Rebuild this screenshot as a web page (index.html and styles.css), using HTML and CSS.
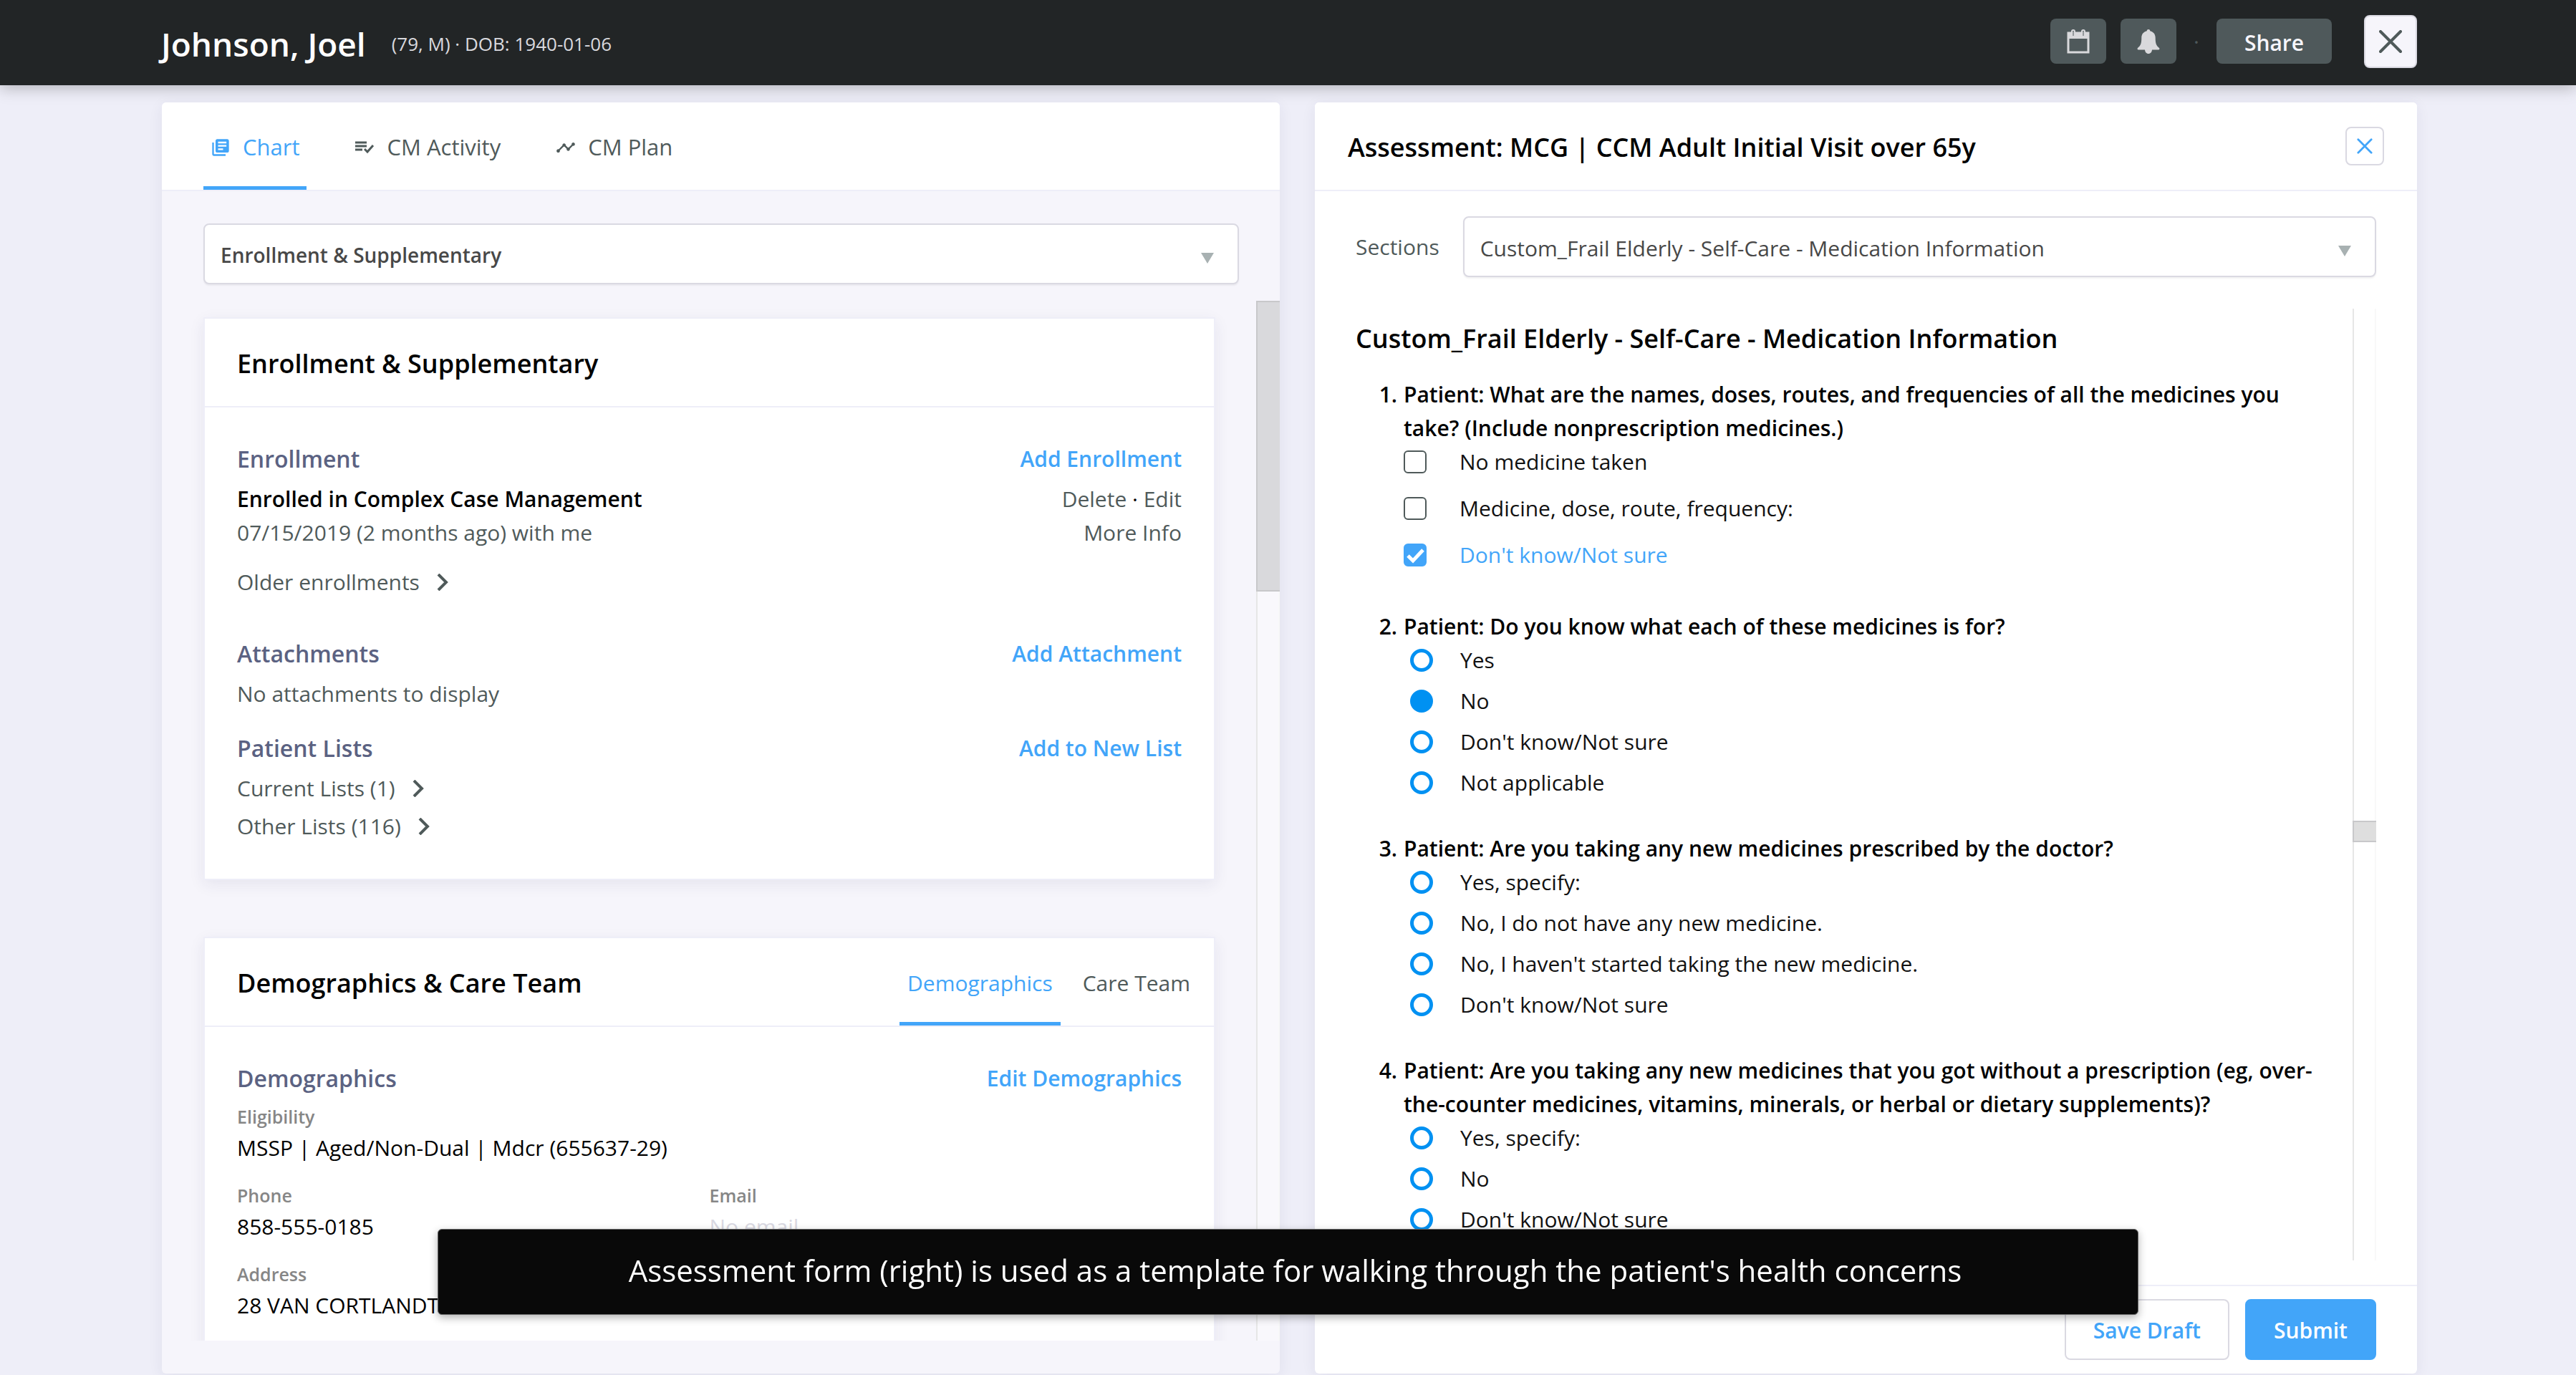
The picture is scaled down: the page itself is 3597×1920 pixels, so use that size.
FILE: index.html
```html
<!DOCTYPE html>
<html lang="en">
<head>
<meta charset="utf-8">
<title>Johnson, Joel</title>
<link rel="stylesheet" href="styles.css">
</head>
<body>
<header class="topbar">
  <div class="patient">
    <h1 class="patient-name">Johnson, Joel</h1>
    <span class="patient-meta">(79, M) · DOB: 1940-01-06</span>
  </div>
  <div class="topbar-actions">
    <button class="icon-button" aria-label="Calendar">
      <svg class="icon-action" viewBox="0 0 32 34" fill="none" stroke="currentColor"><path d="M2 5h28v27H2z" stroke-width="3"/><path d="M1 5h30v8H1z" fill="currentColor" stroke="none"/><rect x="7" y="1" width="4" height="9" rx="2" stroke-width="2"/><rect x="21" y="1" width="4" height="9" rx="2" stroke-width="2"/><path d="M9 4v5M23 4v5" stroke="#4f595b" stroke-width="1"/></svg>
    </button>
    <button class="icon-button" aria-label="Notifications">
      <svg class="icon-action" viewBox="0 0 32 34" fill="currentColor"><path d="M16 0c1.400 0 2.200.9 2.200 2.300 4.600 1 7.500 4.500 7.500 9.700 0 8 1.500 11 5.300 14 .9 1 .4 2.500-1 2.500h-9c-.2 3-2.100 5.500-5 5.500s-4.800-2.500-5-5.500H2c-1.400 0-1.900-1.500-1-2.500 3.800-3 5.300-6 5.300-14 0-5.200 2.900-8.700 7.500-9.700C13.800.9 14.600 0 16 0z"/></svg>
    </button>
    <span class="dot">·</span>
    <button class="share-button">Share</button>
    <button class="close-button" aria-label="Close patient"><svg class="icon-close" viewBox="0 0 32 32" fill="none" stroke="currentColor" stroke-width="4" stroke-linecap="round"><path d="M2 2l28 28M30 2L2 30"/></svg></button>
  </div>
</header>

<main class="workspace">
  <section class="panel chart-panel">
    <nav class="panel-head tabs">
      <a class="tab tab-active" href="#chart"><svg class="icon-tab" viewBox="0 0 24 24" fill="currentColor"><path d="M4 6H2v14c0 1.100.9 2 2 2h14v-2H4V6zm16-4H8c-1.100 0-2 .9-2 2v12c0 1.100.9 2 2 2h12c1.100 0 2-.9 2-2V4c0-1.100-.9-2-2-2zm-1 9H9V9h10v2zm-4 4H9v-2h6v2zm4-8H9V5h10v2z"/></svg>Chart</a>
      <a class="tab" href="#activity"><svg class="icon-tab" viewBox="0 0 28 28" fill="none" stroke="currentColor" stroke-width="3"><path d="M1 7h16M1 12h16M1 17h10M14 16l4 4 8-9"/></svg>CM Activity</a>
      <a class="tab" href="#plan"><svg class="icon-tab" viewBox="0 0 24 24" fill="currentColor"><path d="M23 8c0 1.100-.9 2-2 2-.18 0-.35-.02-.51-.07l-3.560 3.550c.05.16.07.34.07.52 0 1.100-.9 2-2 2s-2-.9-2-2c0-.18.02-.36.07-.52l-2.550-2.550c-.16.05-.34.07-.52.07s-.36-.02-.52-.07l-4.550 4.560c.05.16.07.33.07.51 0 1.100-.9 2-2 2s-2-.9-2-2 .9-2 2-2c.18 0 .35.02.51.07l4.560-4.550C8.020 9.360 8 9.180 8 9c0-1.100.9-2 2-2s2 .9 2 2c0 .18-.02.36-.07.52l2.550 2.550c.16-.05.34-.07.52-.07s.36.02.52.07l3.550-3.560C19.020 8.350 19 8.180 19 8c0-1.100.9-2 2-2s2 .9 2 2z"/></svg>CM Plan</a>
    </nav>
    <div class="select-wrap chart-select">
      <select class="select select-strong" aria-label="Chart section"><option>Enrollment &amp; Supplementary</option></select>
      <svg class="select-arrow" viewBox="0 0 18 15"><path d="M0 0h18L9 15z"/></svg>
    </div>
    <div class="scroll">
      <div class="cards">
        <article class="card">
          <div class="card-head"><h2 class="title">Enrollment &amp; Supplementary</h2></div>
          <div class="card-body">
            <section class="block">
              <div class="row head-row"><h3 class="subtitle">Enrollment</h3><a class="action" href="#add-enrollment">Add Enrollment</a></div>
              <div class="row"><strong class="strong">Enrolled in Complex Case Management</strong><span><a class="link" href="#delete">Delete</a> · <a class="link" href="#edit">Edit</a></span></div>
              <div class="row muted"><span>07/15/2019 (2 months ago) with me</span><a class="link" href="#more">More Info</a></div>
              <button class="expander expander-spaced">Older enrollments<svg class="icon-chevron" viewBox="0 0 16 24" fill="none" stroke="currentColor" stroke-width="4"><path d="M2 1l11 11L2 23"/></svg></button>
            </section>
            <section class="block attachments">
              <div class="row head-row"><h3 class="subtitle">Attachments</h3><a class="action" href="#add-attachment">Add Attachment</a></div>
              <p class="muted">No attachments to display</p>
            </section>
            <section class="block lists">
              <div class="row head-row"><h3 class="subtitle">Patient Lists</h3><a class="action" href="#add-list">Add to New List</a></div>
              <button class="expander">Current Lists (1)<svg class="icon-chevron" viewBox="0 0 16 24" fill="none" stroke="currentColor" stroke-width="4"><path d="M2 1l11 11L2 23"/></svg></button>
              <button class="expander expander-next">Other Lists (116)<svg class="icon-chevron" viewBox="0 0 16 24" fill="none" stroke="currentColor" stroke-width="4"><path d="M2 1l11 11L2 23"/></svg></button>
            </section>
          </div>
        </article>

        <article class="card">
          <div class="card-head">
            <h2 class="title">Demographics &amp; Care Team</h2>
            <nav class="card-tabs"><a class="tab tab-active" href="#demographics">Demographics</a><a class="tab" href="#care-team">Care Team</a></nav>
          </div>
          <div class="card-body">
            <div class="row head-row"><h3 class="subtitle">Demographics</h3><a class="action" href="#edit-demographics">Edit Demographics</a></div>
            <dl class="facts">
              <div class="fact fact-wide"><dt>Eligibility</dt><dd>MSSP | Aged/Non-Dual | Mdcr (655637-29)</dd></div>
              <div class="fact"><dt>Phone</dt><dd>858-555-0185</dd></div>
              <div class="fact"><dt>Email</dt><dd class="empty">No email</dd></div>
              <div class="fact fact-wide"><dt>Address</dt><dd>28 VAN CORTLANDT</dd></div>
            </dl>
          </div>
        </article>
      </div>
      <div class="scrollbar"><div class="thumb thumb-chart"></div></div>
    </div>
  </section>

  <section class="panel form-panel">
    <div class="panel-head form-head">
      <h2 class="title">Assessment: MCG | CCM Adult Initial Visit over 65y</h2>
      <button class="dismiss" aria-label="Close assessment"><svg class="icon-dismiss" viewBox="0 0 24 24" fill="none" stroke="currentColor" stroke-width="3" stroke-linecap="round"><path d="M2 2l20 20M22 2L2 22"/></svg></button>
    </div>
    <div class="sections">
      <label class="muted" for="section">Sections</label>
      <div class="select-wrap">
        <select class="select" id="section"><option>Custom_Frail Elderly - Self-Care - Medication Information</option></select>
        <svg class="select-arrow" viewBox="0 0 18 15"><path d="M0 0h18L9 15z"/></svg>
      </div>
    </div>
    <div class="scroll form-scroll">
      <form class="questions" id="assessment">
        <h3 class="title">Custom_Frail Elderly - Self-Care - Medication Information</h3>
        <div class="question" role="group" aria-labelledby="q1">
          <span class="number">1.</span>
          <p class="prompt" id="q1">Patient: What are the names, doses, routes, and frequencies of all the medicines you take? (Include nonprescription medicines.)</p>
          <div class="options options-check">
            <label class="option"><input class="check" type="checkbox"><span>No medicine taken</span></label>
            <label class="option"><input class="check" type="checkbox"><span>Medicine, dose, route, frequency:</span></label>
            <label class="option option-on"><span class="check-wrap"><input class="check" type="checkbox" checked><svg class="tick" viewBox="0 0 32 32" fill="none" stroke="#fff" stroke-width="5"><path d="M6 17l7 7L27 9"/></svg></span><span>Don't know/Not sure</span></label>
          </div>
        </div>
        <div class="question" role="group" aria-labelledby="q2">
          <span class="number">2.</span>
          <p class="prompt" id="q2">Patient: Do you know what each of these medicines is for?</p>
          <div class="options">
            <label class="option"><input class="radio" type="radio" name="q2"><span>Yes</span></label>
            <label class="option"><input class="radio" type="radio" name="q2" checked><span>No</span></label>
            <label class="option"><input class="radio" type="radio" name="q2"><span>Don't know/Not sure</span></label>
            <label class="option"><input class="radio" type="radio" name="q2"><span>Not applicable</span></label>
          </div>
        </div>
        <div class="question" role="group" aria-labelledby="q3">
          <span class="number">3.</span>
          <p class="prompt" id="q3">Patient: Are you taking any new medicines prescribed by the doctor?</p>
          <div class="options">
            <label class="option"><input class="radio" type="radio" name="q3"><span>Yes, specify:</span></label>
            <label class="option"><input class="radio" type="radio" name="q3"><span>No, I do not have any new medicine.</span></label>
            <label class="option"><input class="radio" type="radio" name="q3"><span>No, I haven't started taking the new medicine.</span></label>
            <label class="option"><input class="radio" type="radio" name="q3"><span>Don't know/Not sure</span></label>
          </div>
        </div>
        <div class="question" role="group" aria-labelledby="q4">
          <span class="number">4.</span>
          <p class="prompt" id="q4">Patient: Are you taking any new medicines that you got without a prescription (eg, over-the-counter medicines, vitamins, minerals, or herbal or dietary supplements)?</p>
          <div class="options">
            <label class="option"><input class="radio" type="radio" name="q4"><span>Yes, specify:</span></label>
            <label class="option"><input class="radio" type="radio" name="q4"><span>No</span></label>
            <label class="option"><input class="radio" type="radio" name="q4"><span>Don't know/Not sure</span></label>
          </div>
        </div>
      </form>
      <div class="scrollbar"><div class="thumb thumb-form"></div></div>
    </div>
    <footer class="form-foot">
      <button class="button" form="assessment" type="button">Save Draft</button>
      <button class="button button-primary" form="assessment">Submit</button>
    </footer>
  </section>
</main>

<div class="caption" role="status">Assessment form (right) is used as a template for walking through the patient's health concerns</div>
</body>
</html>
```

FILE: styles.css
```css
:root {
  --blue: #42a5f9;
  --radio: #0091f2;
  --ink: #4f5a5a;
  --line: #eeeef8;
  --edge: #dad9e2;
}

* {
  box-sizing: border-box;
}

body {
  margin: 0;
  height: 100vh;
  display: flex;
  flex-direction: column;
  overflow: hidden;
  background: #eeeef8;
  color: #000;
  font-family: "Open Sans", "Noto Sans", sans-serif;
  font-size: 30px;
  line-height: 47px;
}

h1, h2, h3, p, dl, dd {
  margin: 0;
}

a {
  text-decoration: none;
}

button, select {
  font: inherit;
  margin: 0;
}

svg {
  display: block;
  flex: none;
}

/* Top bar */
.topbar {
  flex: none;
  height: 119px;
  padding: 0 222px 4px 225px;
  display: flex;
  align-items: center;
  justify-content: space-between;
  background: #222526;
  box-shadow: 0 4px 20px rgba(0, 0, 0, .25);
}

.patient {
  display: flex;
  align-items: center;
  gap: 36px;
  padding-top: 8px;
}

.patient-name {
  color: #fff;
  font-size: 46px;
  font-weight: 600;
}

.patient-meta {
  color: #d9d9de;
  font-size: 26px;
}

.topbar-actions {
  display: flex;
  align-items: center;
  gap: 20px;
}

.icon-button,
.share-button {
  height: 63px;
  border: 0;
  border-radius: 8px;
  background: #4f595b;
  color: #d9d9dc;
}

.icon-button {
  width: 78px;
  padding: 0;
  display: grid;
  place-items: center;
}

.icon-action {
  width: 32px;
  height: 34px;
}

.dot {
  width: 16px;
  text-align: center;
  color: #4f595b;
}

.share-button {
  width: 161px;
  padding: 4px 0 0;
  color: #f6f5fb;
  font-weight: 600;
}

.close-button {
  width: 74px;
  height: 74px;
  margin-left: 25px;
  padding: 0;
  display: grid;
  place-items: center;
  border: 2px solid var(--edge);
  border-radius: 8px;
  background: #f6f5fb;
  color: var(--ink);
}

.icon-close {
  width: 32px;
  height: 32px;
}

/* Panels */
.workspace {
  flex: 1;
  min-height: 0;
  display: grid;
  grid-template-columns: 1561fr 1539fr;
  grid-template-rows: minmax(0, 1fr);
  gap: 49px;
  padding: 24px 222px 2px 226px;
}

.panel {
  display: flex;
  flex-direction: column;
  min-width: 0;
  border-radius: 6px;
  background: #fff;
  box-shadow: 0 4px 20px rgba(40, 40, 90, .07);
}

.chart-panel {
  background: #f6f5fb;
  padding-bottom: 46px;
}

.panel-head {
  flex: none;
  height: 124px;
  display: flex;
  border-bottom: 2px solid var(--line);
  border-radius: 6px 6px 0 0;
  background: #fff;
}

.tabs {
  gap: 57px;
  padding-left: 58px;
  font-size: 31px;
}

.tab {
  display: flex;
  align-items: center;
  gap: 17px;
  padding: 8px 11px 0;
  border-bottom: 5px solid transparent;
  color: var(--ink);
}

.tabs .tab {
  padding: 8px 10px 0;
}

.tab-active {
  border-color: var(--blue);
  color: var(--blue);
}

.icon-tab {
  width: 28px;
  height: 28px;
}

.title {
  font-size: 36px;
  font-weight: 600;
  line-height: 48px;
}

.form-head {
  align-items: center;
  justify-content: space-between;
  padding: 0 46px;
}

.form-head .title,
.card-head .title {
  padding-top: 4px;
}

.dismiss {
  width: 54px;
  height: 54px;
  padding: 0;
  display: grid;
  place-items: center;
  border: 2px solid var(--edge);
  border-radius: 8px;
  background: #fff;
  color: var(--blue);
}

.icon-dismiss {
  width: 22px;
  height: 22px;
}

/* Selects */
.select-wrap {
  position: relative;
  flex: 1;
}

.select {
  width: 100%;
  height: 85px;
  padding: 4px 60px 0 22px;
  appearance: none;
  border: 2px solid var(--edge);
  border-radius: 8px;
  background: #fff;
  box-shadow: 0 2px 2px rgba(0, 0, 0, .05);
  color: #484848;
}

.select-strong {
  font-size: 28px;
  font-weight: 600;
}

.select-arrow {
  position: absolute;
  right: 35px;
  top: 41px;
  width: 18px;
  height: 15px;
  fill: #a8b1b2;
}

.chart-select {
  flex: none;
  margin: 45px 57px 23px 58px;
}

/* Scrolling areas */
.scroll {
  flex: 1;
  min-height: 0;
  display: flex;
  overflow: hidden;
}

.scrollbar {
  flex: none;
  width: 33px;
  border-left: 2px solid #e6e6e6;
  border-right: 2px solid #f8f8f8;
  background: rgba(255, 255, 255, .3);
}

.thumb {
  width: 33px;
  margin-left: -2px;
  border: 2px solid #c8c8ca;
  border-right: 0;
  background: #d9d9dc;
}

.thumb-chart {
  height: 406px;
}

.thumb-form {
  height: 30px;
  margin-top: 715px;
  background: #dedede;
}

/* Chart cards */
.cards {
  flex: 1;
  min-width: 0;
  display: flex;
  flex-direction: column;
  gap: 79px;
  padding: 23px 57px 0 58px;
}

.card {
  flex: none;
  border: 2px solid var(--line);
  background: #fff;
  box-shadow: 0 6px 20px rgba(40, 40, 90, .08);
}

.card-head {
  height: 124px;
  display: flex;
  align-items: center;
  justify-content: space-between;
  padding: 0 22px 0 45px;
  border-bottom: 2px solid var(--line);
}

.card-tabs {
  align-self: stretch;
  display: flex;
  gap: 20px;
}

.card-body {
  padding: 48px 45px 50px;
}

.row {
  display: flex;
  justify-content: space-between;
}

.head-row {
  margin-bottom: 8px;
  line-height: 48px;
}

.subtitle {
  color: #5b6282;
  font-size: 32px;
  font-weight: 600;
}

.action {
  color: var(--blue);
  font-weight: 600;
}

.strong {
  font-weight: 600;
}

.muted,
.link {
  color: var(--ink);
}

.expander {
  display: flex;
  align-items: center;
  gap: 24px;
  padding: 0;
  border: 0;
  background: none;
  color: var(--ink);
}

.icon-chevron {
  width: 16px;
  height: 24px;
}

.expander-spaced {
  margin-top: 22px;
}

.expander-next {
  margin-top: 6px;
}

.attachments {
  margin-top: 53px;
}

.lists {
  margin-top: 29px;
}

.facts {
  display: grid;
  grid-template-columns: 1fr 1fr;
  row-gap: 25px;
  padding-top: 3px;
}

.fact-wide {
  grid-column: 1 / -1;
}

.fact dt {
  margin-bottom: 2px;
  color: #868686;
  font-size: 25px;
  font-weight: 600;
  line-height: 36px;
}

.fact .empty {
  color: var(--edge);
}

/* Assessment form */
.sections {
  display: flex;
  align-items: center;
  gap: 33px;
  margin: 35px 57px 44px;
}

.form-scroll {
  margin-right: 57px;
}

.questions {
  flex: 1;
  min-width: 0;
  padding: 18px 48px 0 57px;
}

.questions .title {
  margin-bottom: 30px;
}

.question {
  display: grid;
  grid-template-columns: 58px 1fr;
  column-gap: 9px;
  margin-bottom: 35px;
  font-weight: 600;
}

.number {
  text-align: right;
}

.options {
  grid-column: 2;
  font-weight: 400;
}

.option {
  display: flex;
  align-items: center;
  gap: 38px;
  margin-bottom: 10px;
  padding-left: 9px;
  color: #111;
}

.options-check .option {
  gap: 46px;
  margin-bottom: 18px;
  padding-left: 0;
}

.options-check .option-on {
  color: var(--blue);
}

.check,
.radio {
  flex: none;
  display: block;
  width: 32px;
  height: 32px;
  margin: 0;
  appearance: none;
  background: #fff;
}

.check {
  border: 2px solid var(--ink);
  border-radius: 6px;
}

.check:checked {
  border-color: var(--blue);
  background: var(--blue);
}

.check-wrap {
  position: relative;
}

.tick {
  position: absolute;
  inset: 0;
}

.radio {
  border: 5px solid var(--radio);
  border-radius: 50%;
}

.radio:checked {
  background: var(--radio);
}

.form-foot {
  flex: none;
  display: flex;
  justify-content: flex-end;
  gap: 22px;
  margin-top: 34px;
  padding: 18px 57px 19px;
  border-top: 2px solid var(--line);
}

.button {
  height: 85px;
  padding: 2px 38px 0;
  border: 2px solid var(--edge);
  border-radius: 8px;
  background: #fff;
  color: var(--blue);
  font-weight: 600;
}

.button-primary {
  border-color: var(--blue);
  background: var(--blue);
  color: #fff;
}

/* Caption laid over the page */
.caption {
  position: fixed;
  left: 17%;
  right: 17%;
  bottom: 84px;
  height: 120px;
  padding: 0 0 6px 20px;
  display: flex;
  align-items: center;
  justify-content: center;
  border: 1px solid #666;
  border-radius: 6px;
  background: #090909;
  box-shadow: 0 4px 12px rgba(0, 0, 0, .3);
  color: #fff;
  font-size: 42px;
}
```
